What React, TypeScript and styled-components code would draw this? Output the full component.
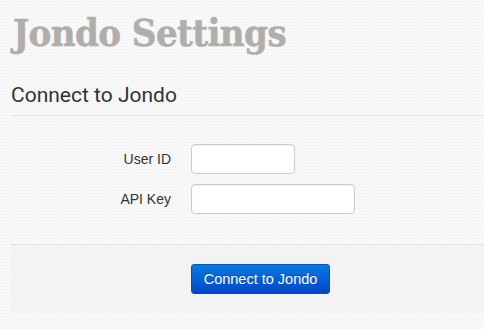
import React from 'react';
import styled, { createGlobalStyle } from 'styled-components';

const GlobalStyle = createGlobalStyle`
  html, body {
    margin: 0;
    padding: 0;
  }
  body {
    background-color: #f8f8f8;
    background-image: radial-gradient(#efefef 0.6px, transparent 0.8px);
    background-size: 3px 3px;
    font-family: "Liberation Sans", Arial, sans-serif;
    color: #333;
  }
`;

const Page = styled.div`
  padding: 6px 0 16px 11px;
`;

const Title = styled.h1`
  margin: 0 0 0 2px;
  font-family: "DejaVu Serif Condensed", "DejaVu Serif", serif;
  font-weight: bold;
  font-size: 38px;
  line-height: 54px;
  color: #b0aeab;
  letter-spacing: -0.6px;
  -webkit-text-stroke: 0.5px #b0aeab;
`;

const Legend = styled.div`
  margin-top: 15px;
  font-family: Roboto, "Liberation Sans", sans-serif;
  font-size: 21px;
  line-height: 40px;
  color: #333;
  border-bottom: 1px solid #e2e2e2;
  margin-bottom: 28px;
`;

const ControlGroup = styled.div`
  display: flex;
  align-items: center;
  margin-bottom: 10px;
`;

const Label = styled.label`
  width: 160px;
  text-align: right;
  font-size: 14px;
  color: #333;
  margin-right: 20px;
`;

const Input = styled.input<{ $w: number }>`
  box-sizing: border-box;
  width: ${p => p.$w}px;
  height: 30px;
  padding: 4px 6px;
  border: 1px solid #cccccc;
  border-radius: 4px;
  background: #fff;
  box-shadow: inset 0 1px 1px rgba(0, 0, 0, 0.075);
  font-size: 14px;
  outline: none;
`;

const Actions = styled.div`
  margin-top: 30px;
  padding: 19px 20px 19px 180px;
  background: #f3f3f3;
  border-top: 1px solid #e2e2e2;
`;

const Button = styled.button`
  box-sizing: border-box;
  width: 139px;
  height: 30px;
  padding: 0;
  border: 1px solid #0052b8;
  border-radius: 3px;
  background-image: linear-gradient(to bottom, #0a7ae0, #0046cb);
  color: #fff;
  font-family: "Liberation Sans", Arial, sans-serif;
  font-size: 14.5px;
  text-shadow: 0 -1px 0 rgba(0, 0, 0, 0.25);
  cursor: pointer;
`;

export default function App() {
  return (
    <>
      <GlobalStyle />
      <Page>
        <Title>Jondo Settings</Title>
        <Legend>Connect to Jondo</Legend>
        <ControlGroup>
          <Label htmlFor="user-id">User ID</Label>
          <Input id="user-id" $w={104} />
        </ControlGroup>
        <ControlGroup>
          <Label htmlFor="api-key">API Key</Label>
          <Input id="api-key" $w={164} />
        </ControlGroup>
        <Actions>
          <Button type="button">Connect to Jondo</Button>
        </Actions>
      </Page>
    </>
  );
}
